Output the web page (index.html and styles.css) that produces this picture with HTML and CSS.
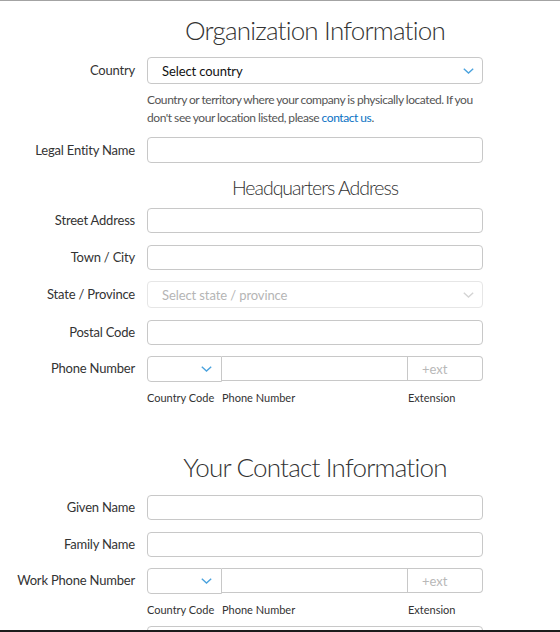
FILE: index.html
```html
<!DOCTYPE html>
<html lang="en">
<head>
<meta charset="utf-8">
<title>Organization Information</title>
<link rel="stylesheet" href="styles.css">
</head>
<body>
<div class="page">
  <h1 class="title title-first">Organization Information</h1>

  <div class="row">
    <label class="label label-select">Country</label>
    <div class="field">
      <div class="select">
        <span class="select-text">Select country</span>
        <svg class="chev" width="11" height="6" viewBox="0 0 11 6"><polyline points="0.8,0.8 5.5,5 10.2,0.8" fill="none" stroke="#4ba3de" stroke-width="1.4"/></svg>
      </div>
      <p class="help">Country or territory where your company is physically located. If you don't see your location listed, please <a class="link" href="#">contact us</a>.</p>
    </div>
  </div>

  <div class="row row-legal">
    <label class="label label-tall">Legal Entity Name</label>
    <div class="field"><div class="input input-tall"></div></div>
  </div>

  <h2 class="subtitle">Headquarters Address</h2>

  <div class="fields">
    <div class="row">
      <label class="label">Street Address</label>
      <div class="field"><div class="input"></div></div>
    </div>
    <div class="row">
      <label class="label">Town / City</label>
      <div class="field"><div class="input"></div></div>
    </div>
    <div class="row">
      <label class="label label-select">State / Province</label>
      <div class="field">
        <div class="select select-disabled">
          <span class="select-text">Select state / province</span>
          <svg class="chev" width="11" height="6" viewBox="0 0 11 6"><polyline points="0.8,0.8 5.5,5 10.2,0.8" fill="none" stroke="#d4d4d4" stroke-width="1.4"/></svg>
        </div>
      </div>
    </div>
    <div class="row">
      <label class="label">Postal Code</label>
      <div class="field"><div class="input"></div></div>
    </div>
    <div class="row">
      <label class="label">Phone Number</label>
      <div class="field">
        <div class="phone">
          <div class="cc">
            <svg class="chev" width="11" height="6" viewBox="0 0 11 6"><polyline points="0.8,0.8 5.5,5 10.2,0.8" fill="none" stroke="#4ba3de" stroke-width="1.4"/></svg>
          </div>
          <div class="num"></div>
          <div class="ext"><span class="ph">+ext</span></div>
        </div>
        <div class="phone-labels">
          <span class="pl pl-cc">Country Code</span>
          <span class="pl pl-num">Phone Number</span>
          <span class="pl pl-ext">Extension</span>
        </div>
      </div>
    </div>
  </div>

  <h1 class="title title-second">Your Contact Information</h1>

  <div class="fields">
    <div class="row">
      <label class="label">Given Name</label>
      <div class="field"><div class="input"></div></div>
    </div>
    <div class="row">
      <label class="label">Family Name</label>
      <div class="field"><div class="input"></div></div>
    </div>
    <div class="row">
      <label class="label">Work Phone Number</label>
      <div class="field">
        <div class="phone">
          <div class="cc">
            <svg class="chev" width="11" height="6" viewBox="0 0 11 6"><polyline points="0.8,0.8 5.5,5 10.2,0.8" fill="none" stroke="#4ba3de" stroke-width="1.4"/></svg>
          </div>
          <div class="num"></div>
          <div class="ext"><span class="ph">+ext</span></div>
        </div>
        <div class="phone-labels">
          <span class="pl pl-cc">Country Code</span>
          <span class="pl pl-num">Phone Number</span>
          <span class="pl pl-ext">Extension</span>
        </div>
      </div>
    </div>
  </div>

  <div class="row row-next">
    <span class="label"></span>
    <div class="field"><div class="input"></div></div>
  </div>
</div>
<div class="window-edge"></div>
</body>
</html>
```
FILE: styles.css
```css
html, body {
  margin: 0;
  padding: 0;
  background: #ffffff;
}
body {
  border-top: 1px solid #a3a3a3;
  font-family: Lato, "Open Sans", "Liberation Sans", sans-serif;
  color: #333333;
  overflow: hidden;
  height: 631px;
}
.page {
  width: 560px;
}
.title {
  margin: 0 0 0 147px;
  width: 336px;
  text-align: center;
  font-weight: 300;
  font-size: 26px;
  line-height: 32px;
  letter-spacing: -0.8px;
  color: #333333;
  white-space: nowrap;
}
.title-first {
  margin-top: 13px;
  margin-bottom: 11px;
}
.title-second {
  margin-top: 46px;
  margin-bottom: 12px;
}
.subtitle {
  margin: 13px 0 8px 147px;
  width: 336px;
  text-align: center;
  font-weight: 300;
  font-size: 19.5px;
  line-height: 24px;
  letter-spacing: -1px;
  color: #333333;
}
.row {
  display: grid;
  grid-template-columns: 135px 336px;
  column-gap: 12px;
  align-items: start;
}
.row-legal {
  margin-top: 10px;
}
.row-next {
  margin-top: 9px;
}
.fields {
  display: flex;
  flex-direction: column;
  gap: 11.5px;
}
.label {
  text-align: right;
  font-size: 13px;
  line-height: 25px;
  letter-spacing: -0.2px;
  color: #333333;
  white-space: nowrap;
}
.label-select {
  line-height: 27px;
}
.label-tall {
  line-height: 26px;
}
.field {
  min-width: 0;
}
.input {
  box-sizing: border-box;
  height: 25px;
  border: 1px solid #c8c8c8;
  border-radius: 4px;
  background: #fff;
}
.input-tall {
  height: 26px;
}
.select {
  box-sizing: border-box;
  height: 27px;
  border: 1px solid #c8c8c8;
  border-radius: 4px;
  display: flex;
  align-items: center;
  justify-content: space-between;
  padding: 0 8px 0 14px;
  background: #fff;
}
.select-text {
  font-size: 13px;
  letter-spacing: -0.1px;
  color: #111111;
}
.select-disabled {
  border-color: #e6e6e6;
}
.select-disabled .select-text {
  color: #b5b5b5;
}
.chev {
  display: block;
  flex: none;
}
.help {
  margin: 7px 0 0 0;
  font-size: 12px;
  line-height: 18px;
  letter-spacing: -0.42px;
  word-spacing: -0.3px;
  color: #555555;
}
.link {
  color: #0a72c4;
  text-decoration: none;
}
.phone {
  display: flex;
  align-items: flex-start;
}
.cc {
  box-sizing: border-box;
  width: 75px;
  height: 26px;
  border: 1px solid #c8c8c8;
  border-radius: 4px 0 0 4px;
  display: flex;
  align-items: center;
  justify-content: flex-end;
  padding-right: 9px;
  padding-bottom: 1px;
  background: #fff;
  flex: none;
}
.num {
  box-sizing: border-box;
  height: 25px;
  flex: 1;
  border: 1px solid #c8c8c8;
  border-left: none;
  background: #fff;
}
.ext {
  box-sizing: border-box;
  width: 75px;
  height: 25px;
  flex: none;
  border: 1px solid #c8c8c8;
  border-left: none;
  border-radius: 0 4px 4px 0;
  padding-left: 14px;
  display: flex;
  align-items: center;
  background: #fff;
}
.ph {
  font-size: 13px;
  color: #b8b8b8;
}
.phone-labels {
  display: flex;
  margin-top: 9px;
  font-size: 11px;
  line-height: 14px;
  color: #333333;
}
.pl {
  white-space: nowrap;
}
.pl-cc {
  width: 75px;
  flex: none;
}
.pl-num {
  flex: 1;
}
.pl-ext {
  width: 75px;
  flex: none;
  padding-left: 3px;
}
.window-edge {
  position: fixed;
  left: 0;
  right: 0;
  bottom: 0;
  height: 2px;
  background: #1c1c1c;
}
```
